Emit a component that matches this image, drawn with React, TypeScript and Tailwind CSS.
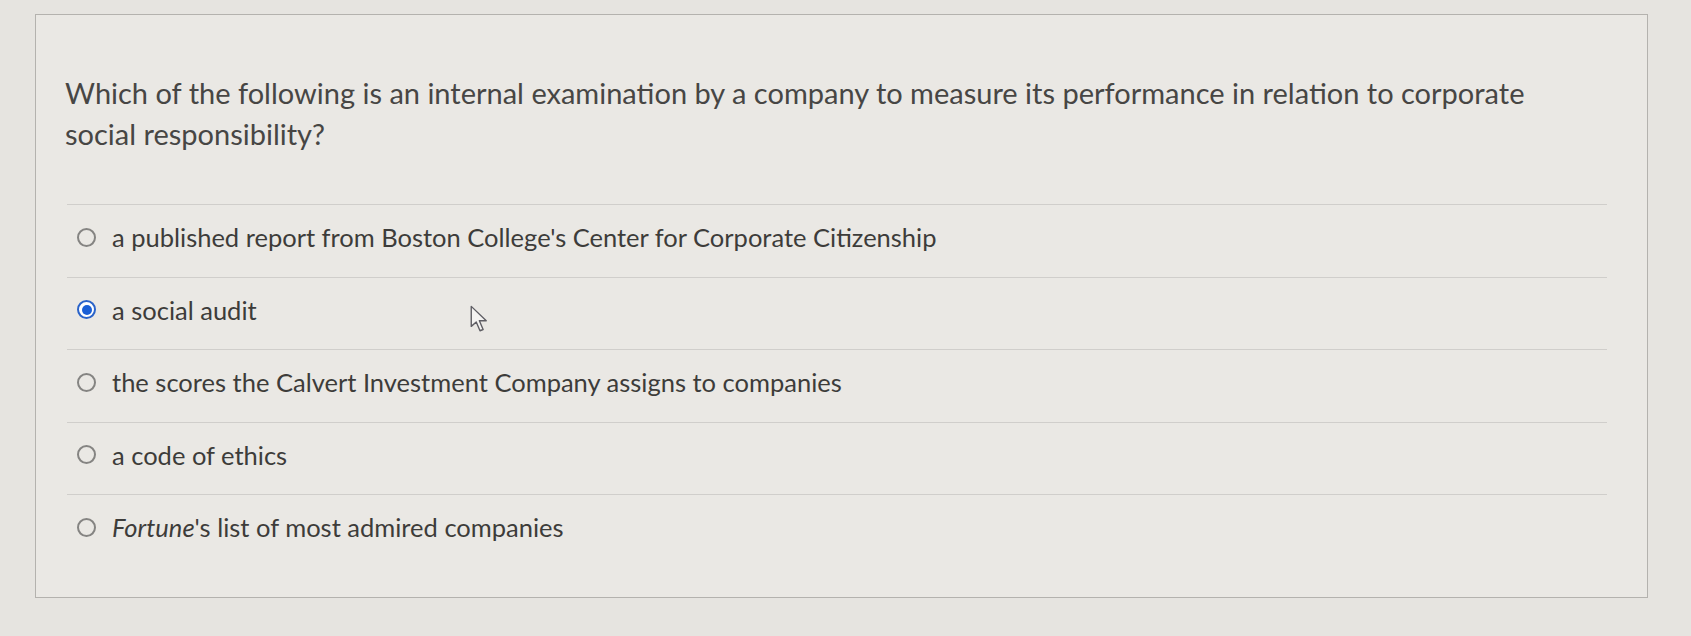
import React from "react";

const OPTIONS: { id: string; label: React.ReactNode }[] = [
  { id: "a", label: "a published report from Boston College's Center for Corporate Citizenship" },
  { id: "b", label: "a social audit" },
  { id: "c", label: "the scores the Calvert Investment Company assigns to companies" },
  { id: "d", label: "a code of ethics" },
  {
    id: "e",
    label: (
      <>
        <em>Fortune</em>'s list of most admired companies
      </>
    ),
  },
];

const SELECTED = "b";

function Radio({ checked }: { checked: boolean }) {
  if (checked) {
    return (
      <span className="flex h-[19px] w-[19px] shrink-0 items-center justify-center rounded-full border-[2.5px] border-[#2a63c9] bg-white">
        <span className="h-[10px] w-[10px] rounded-full bg-[#1a5fd6]" />
      </span>
    );
  }
  return <span className="h-[19px] w-[19px] shrink-0 rounded-full border-[2px] border-[#858482]" />;
}

export default function App() {
  return (
    <div className="relative h-[636px] w-[1691px] overflow-hidden bg-[#e6e4e0] pl-[35px] pt-[14px] font-['Lato','Open_Sans',sans-serif]">
      <div className="h-[584px] w-[1613px] border border-[#b4b2ae] bg-[#eae8e4] pl-[29px] pr-[40px] pt-[57px]">
        <p className="m-0 pr-[40px] text-[29px] leading-[41px] text-[#474644]">
          Which of the following is an internal examination by a company to measure its performance in relation to corporate
          social responsibility?
        </p>

        <div className="ml-[2px] mt-[50px]">
          {OPTIONS.map((o) => (
            <div
              key={o.id}
              className="flex h-[72.5px] items-start gap-[16px] border-t border-[#d0cecb] pl-[10px] pt-[18px]"
            >
              <span className="flex h-[28px] items-center">
                <Radio checked={o.id === SELECTED} />
              </span>
              <span className="text-[25.5px] leading-[28px] text-[#3d3c3a]">{o.label}</span>
            </div>
          ))}
        </div>
      </div>

      {/* mouse pointer over the page */}
      <svg
        className="absolute left-[470px] top-[305px]"
        width="20"
        height="29"
        viewBox="0 0 16 23"
      >
        <path
          d="M1 1 L1 17 L5 13.5 L8 20.5 L10.5 19.5 L7.5 12.5 L13 12.5 Z"
          fill="#f4f3f1"
          stroke="#5e5d63"
          strokeWidth="1.1"
          strokeLinejoin="round"
        />
      </svg>
    </div>
  );
}
